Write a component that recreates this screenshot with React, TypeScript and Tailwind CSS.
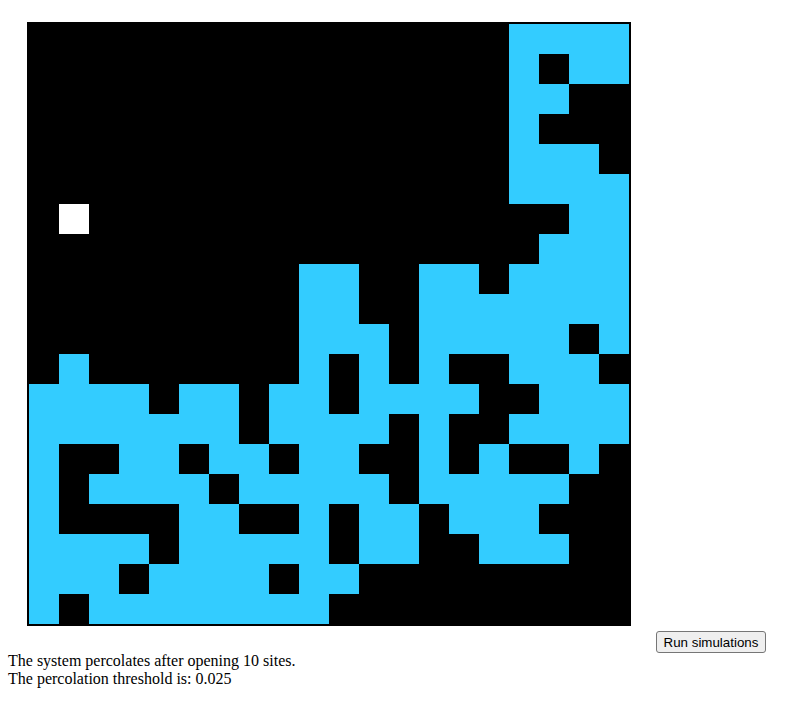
import React from "react";

const GRID = [
  "................####",
  "................#.##",
  "................##..",
  "................#...",
  "................###.",
  "................####",
  ".o................##",
  ".................###",
  ".........##..##.####",
  ".........##..#######",
  ".........###.#####.#",
  ".#.......#.#.#..###.",
  "####.##.##.####..###",
  "#######.####.#..####",
  "#..##.##.##..#.#..#.",
  "#.####.#####.#####..",
  "#....##..#.##.###...",
  "####.#####.##..###..",
  "###.####.##.........",
  "#.########..........",
];

function Cell({ c }: { c: string }) {
  if (c === "#") return <div className="w-[30px] h-[30px] bg-[#33ccff]" />;
  if (c === "o") return <div className="w-[30px] h-[30px] bg-white" />;
  return <div className="w-[30px] h-[30px] bg-black" />;
}

export default function App() {
  return (
    <div className="w-[793px] h-[702px] bg-white flex flex-col" style={{ fontFamily: '"Liberation Serif", "Times New Roman", serif' }}>
      <div className="mt-[22px] ml-[27px] w-[604px] h-[604px] border-2 border-black">
        <div className="grid grid-cols-[repeat(20,30px)] grid-rows-[repeat(20,30px)]">
          {GRID.flatMap((row, r) =>
            row.split("").map((c, i) => <Cell key={r * 20 + i} c={c} />)
          )}
        </div>
      </div>
      <div className="mt-[5px] h-[21px] flex">
        <button
          className="ml-[656px] w-[110px] h-[22px] shrink-0 rounded-[3px] border border-[#767676] bg-[#efefef] text-black text-[13.333px] leading-[normal] px-[6px] flex items-center justify-center"
          style={{ fontFamily: '"Liberation Sans", Arial, sans-serif' }}
        >
          Run simulations
        </button>
      </div>
      <div className="pl-[8px] text-[16px] leading-[normal] text-black">
        <div>The system percolates after opening 10 sites.</div>
        <div>The percolation threshold is: 0.025</div>
      </div>
    </div>
  );
}
